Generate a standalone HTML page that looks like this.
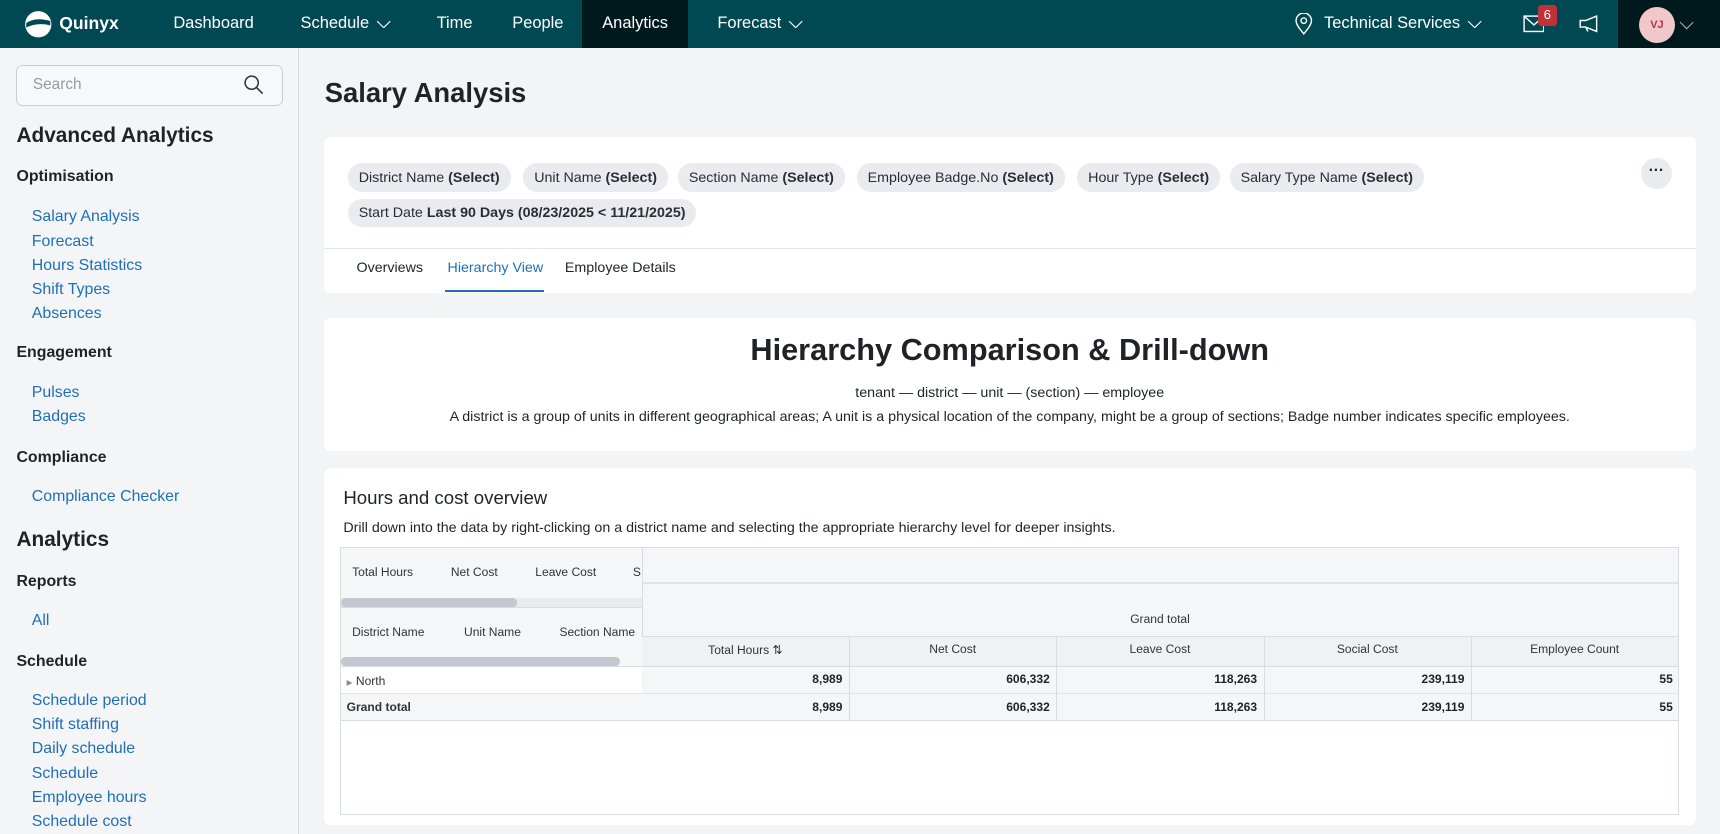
<!DOCTYPE html>
<html><head><meta charset="utf-8"><style>
*{box-sizing:border-box;margin:0;padding:0}
html,body{width:1720px;height:834px;overflow:hidden;background:#f3f4f6}
#w{zoom:1.09694;width:1568px;height:760px;position:relative;font-family:"Liberation Sans",sans-serif;color:#1f2328}
.a{position:absolute;white-space:nowrap}
.nav{left:0;top:0;width:1568px;height:44px;background:#004852;color:#fff;font-size:15px}
.nav .a{top:13px}
.side{left:0;top:44px;width:273px;height:716px;background:#f4f5f7;border-right:1px solid #d7dbe0}
.lk{color:#1e6fb8;font-size:14.5px;left:29px}
.h3{font-weight:bold;font-size:14.5px;left:15px}
.h2{font-weight:bold;font-size:19px;left:15px}
.card{background:#fff;border-radius:6px}
.chip{background:#e9ebef;border-radius:13px;height:26px;font-size:13px;padding:6px 10px;color:#2a2e33}
.tc{font-size:11px;color:#333}
.num{font-size:11px;font-weight:bold;text-align:right}
.chev{display:inline-block;vertical-align:middle;margin-left:6px}
</style></head><body><div id="w">
<div class="a nav">
 <svg class="a" style="left:22px;top:9px" width="26" height="26" viewBox="0 0 26 26"><circle cx="13" cy="13" r="12" fill="#fff"/><path d="M2 12 Q10 6 24 10 L24 14 Q12 11 2 16Z" fill="#004852"/></svg>
 <div class="a" style="left:54px;font-weight:bold;font-size:16px;top:12px">Quinyx</div>
 <div class="a" style="left:158px">Dashboard</div>
 <div class="a" style="left:274px">Schedule<svg class="chev" width="14" height="8"><path d="M1 1 L7 7 L13 1" fill="none" stroke="#fff" stroke-width="1"/></svg></div>
 <div class="a" style="left:398px">Time</div>
 <div class="a" style="left:467px">People</div>
 <div class="a" style="left:531px;top:0;width:96px;height:44px;background:#00191c"></div>
 <div class="a" style="left:549px">Analytics</div>
 <div class="a" style="left:654px">Forecast<svg class="chev" width="14" height="8"><path d="M1 1 L7 7 L13 1" fill="none" stroke="#fff" stroke-width="1"/></svg></div>
 <svg class="a" style="left:1181px;top:12px" width="16" height="20" viewBox="0 0 16 20"><path d="M8 19 C3 13 1 10 1 7 A7 7 0 0 1 15 7 C15 10 13 13 8 19Z" fill="none" stroke="#fff" stroke-width="1.3"/><circle cx="8" cy="7" r="2.5" fill="none" stroke="#fff" stroke-width="1.3"/></svg>
 <div class="a" style="left:1207px">Technical Services<svg class="chev" width="14" height="8"><path d="M1 1 L7 7 L13 1" fill="none" stroke="#fff" stroke-width="1"/></svg></div>
 <svg class="a" style="left:1388px;top:14px" width="20" height="16"><rect x="1" y="1" width="18" height="14" fill="none" stroke="#fff" stroke-width="1.3"/><path d="M1 1 L10 9 L19 1" fill="none" stroke="#fff" stroke-width="1.3"/></svg>
 <div class="a" style="left:1402px;top:5px;width:17px;height:19px;background:#c0313a;border-radius:3px;font-size:12px;text-align:center;line-height:19px">6</div>
 <svg class="a" style="left:1439px;top:14px" width="22" height="16"><path d="M2 5 H7 L17 1 V15 L7 11 H2Z M7 11 L9 15" fill="none" stroke="#fff" stroke-width="1.3"/></svg>
 <div class="a" style="left:1475px;top:0;width:93px;height:44px;background:#00191c"></div>
 <div class="a" style="left:1494px;top:6px;width:33px;height:33px;border-radius:50%;background:#f0c8cc;color:#b2344a;font-size:10px;font-weight:bold;text-align:center;line-height:33px">VJ</div>
 <svg class="a" style="left:1531px;top:19px" width="14" height="8"><path d="M1 1 L7 7 L13 1" fill="none" stroke="#aaa" stroke-width="1"/></svg>
</div>
<div class="a side">
 <div class="a" style="left:15px;top:15px;width:243px;height:38px;border:1px solid #c9ced6;border-radius:6px;background:#f7f8fa"></div>
 <div class="a" style="left:30px;top:25px;color:#999;font-size:14px">Search</div>
 <svg class="a" style="left:222px;top:24px" width="18" height="18"><circle cx="7" cy="7" r="6" fill="none" stroke="#333" stroke-width="1.4"/><path d="M11 11 L17 17" stroke="#333" stroke-width="1.4"/></svg>
</div>
<div class="a h2" style="top:113px">Advanced Analytics</div>
<div class="a h3" style="top:153px">Optimisation</div>
<div class="a lk" style="top:190px">Salary Analysis</div>
<div class="a lk" style="top:212px">Forecast</div>
<div class="a lk" style="top:234px">Hours Statistics</div>
<div class="a lk" style="top:256px">Shift Types</div>
<div class="a lk" style="top:278px">Absences</div>
<div class="a h3" style="top:314px">Engagement</div>
<div class="a lk" style="top:350px">Pulses</div>
<div class="a lk" style="top:372px">Badges</div>
<div class="a h3" style="top:409px">Compliance</div>
<div class="a lk" style="top:445px">Compliance Checker</div>
<div class="a h2" style="top:481px">Analytics</div>
<div class="a h3" style="top:522px">Reports</div>
<div class="a lk" style="top:558px">All</div>
<div class="a h3" style="top:595px">Schedule</div>
<div class="a lk" style="top:631px">Schedule period</div>
<div class="a lk" style="top:653px">Shift staffing</div>
<div class="a lk" style="top:675px">Daily schedule</div>
<div class="a lk" style="top:697px">Schedule</div>
<div class="a lk" style="top:719px">Employee hours</div>
<div class="a lk" style="top:741px">Schedule cost</div>

<div class="a" style="left:296px;top:70px;font-size:25px;font-weight:bold">Salary Analysis</div>
<div class="a card" style="left:295px;top:125px;width:1251px;height:142px"></div>
<div class="a chip" style="left:317px;top:149px">District Name <b>(Select)</b></div>
<div class="a chip" style="left:477px;top:149px">Unit Name <b>(Select)</b></div>
<div class="a chip" style="left:618px;top:149px">Section Name <b>(Select)</b></div>
<div class="a chip" style="left:781px;top:149px">Employee Badge.No <b>(Select)</b></div>
<div class="a chip" style="left:982px;top:149px">Hour Type <b>(Select)</b></div>
<div class="a chip" style="left:1121px;top:149px">Salary Type Name <b>(Select)</b></div>
<div class="a chip" style="left:317px;top:181px">Start Date <b>Last 90 Days (08/23/2025 &lt; 11/21/2025)</b></div>
<div class="a" style="left:1496px;top:144px;width:28px;height:28px;border-radius:50%;background:#e9ebef;text-align:center;font-weight:bold;font-size:14px;line-height:24px">···</div>
<div class="a" style="left:295px;top:226px;width:1251px;height:1px;background:#e4e6ea"></div>
<div class="a" style="left:325px;top:237px;font-size:13px">Overviews</div>
<div class="a" style="left:408px;top:237px;font-size:13px;color:#1e6fb8">Hierarchy View</div>
<div class="a" style="left:406px;top:264px;width:90px;height:2px;background:#1e6fb8"></div>
<div class="a" style="left:515px;top:237px;font-size:13px">Employee Details</div>

<div class="a card" style="left:295px;top:290px;width:1251px;height:121px"></div>
<div class="a" style="left:295px;top:303px;width:1251px;text-align:center;font-size:28px;font-weight:bold">Hierarchy Comparison &amp; Drill-down</div>
<div class="a" style="left:295px;top:351px;width:1251px;text-align:center;font-size:13px">tenant — district — unit — (section) — employee</div>
<div class="a" style="left:295px;top:373px;width:1251px;text-align:center;font-size:13px">A district is a group of units in different geographical areas; A unit is a physical location of the company, might be a group of sections; Badge number indicates specific employees.</div>

<div class="a card" style="left:295px;top:427px;width:1251px;height:325px"></div>
<div class="a" style="left:313px;top:444px;font-size:17px">Hours and cost overview</div>
<div class="a" style="left:313px;top:474px;font-size:13px">Drill down into the data by right-clicking on a district name and selecting the appropriate hierarchy level for deeper insights.</div>
<div class="a" style="left:310px;top:499px;width:1221px;height:244px;border:1px solid #d8dbe0"></div>
<div class="a" style="left:311px;top:500px;width:274px;height:107px;background:#f5f6f8"></div>
<div class="a" style="left:585px;top:500px;width:945px;height:107px;background:#f5f6f8;border-left:1px solid #d8dbe0"></div>
<div class="a" style="left:585px;top:531px;width:945px;height:1px;background:#e0e2e6"></div>
<div class="a" style="left:585px;top:580px;width:945px;height:27px;background:#f0f1f3;border-top:1px solid #d8dbe0"></div>
<div class="a tc" style="left:321px;top:515px">Total Hours</div>
<div class="a tc" style="left:411px;top:515px">Net Cost</div>
<div class="a tc" style="left:488px;top:515px">Leave Cost</div>
<div class="a tc" style="left:577px;top:515px">S</div>
<div class="a" style="left:311px;top:545px;width:274px;height:8px;background:#e8eaee"></div>
<div class="a" style="left:311px;top:545px;width:160px;height:8px;border-radius:4px;background:#c2c7d0"></div>
<div class="a" style="left:311px;top:553px;width:274px;height:1px;background:#d8dbe0"></div>
<div class="a tc" style="left:321px;top:570px">District Name</div>
<div class="a tc" style="left:423px;top:570px">Unit Name</div>
<div class="a tc" style="left:510px;top:570px">Section Name</div>
<div class="a" style="left:311px;top:599px;width:254px;height:8px;border-radius:4px;background:#c2c7d0"></div>
<div class="a tc" style="left:585px;top:558px;width:945px;text-align:center">Grand total</div>
<div class="a tc" style="left:585px;top:586px;width:189px;text-align:center">Total Hours ⇅</div>
<div class="a tc" style="left:774px;top:585px;width:189px;text-align:center">Net Cost</div>
<div class="a tc" style="left:963px;top:585px;width:189px;text-align:center">Leave Cost</div>
<div class="a tc" style="left:1152px;top:585px;width:189px;text-align:center">Social Cost</div>
<div class="a tc" style="left:1341px;top:585px;width:189px;text-align:center">Employee Count</div>
<div class="a" style="left:585px;top:607px;width:945px;height:49px;background:#f5f6f8"></div>
<div class="a" style="left:311px;top:632px;width:274px;height:24px;background:#f5f6f8"></div>
<div class="a" style="left:311px;top:607px;width:1220px;height:1px;background:#d8dbe0"></div>
<div class="a" style="left:311px;top:632px;width:1220px;height:1px;background:#e2e4e8"></div>
<div class="a" style="left:311px;top:656px;width:1220px;height:1px;background:#d8dbe0"></div>
<div class="a" style="left:774px;top:580px;width:1px;height:76px;background:#d8dbe0"></div>
<div class="a" style="left:963px;top:580px;width:1px;height:76px;background:#d8dbe0"></div>
<div class="a" style="left:1152px;top:580px;width:1px;height:76px;background:#d8dbe0"></div>
<div class="a" style="left:1341px;top:580px;width:1px;height:76px;background:#d8dbe0"></div>
<div class="a tc" style="left:316px;top:614px"><span style="font-size:7px;color:#888">▶</span> North</div>
<div class="a tc" style="left:316px;top:638px;font-weight:bold">Grand total</div>
<div class="a num" style="left:585px;top:613px;width:183px">8,989</div>
<div class="a num" style="left:774px;top:613px;width:183px">606,332</div>
<div class="a num" style="left:963px;top:613px;width:183px">118,263</div>
<div class="a num" style="left:1152px;top:613px;width:183px">239,119</div>
<div class="a num" style="left:1341px;top:613px;width:184px">55</div>
<div class="a num" style="left:585px;top:638px;width:183px">8,989</div>
<div class="a num" style="left:774px;top:638px;width:183px">606,332</div>
<div class="a num" style="left:963px;top:638px;width:183px">118,263</div>
<div class="a num" style="left:1152px;top:638px;width:183px">239,119</div>
<div class="a num" style="left:1341px;top:638px;width:184px">55</div>
</div></body></html>
